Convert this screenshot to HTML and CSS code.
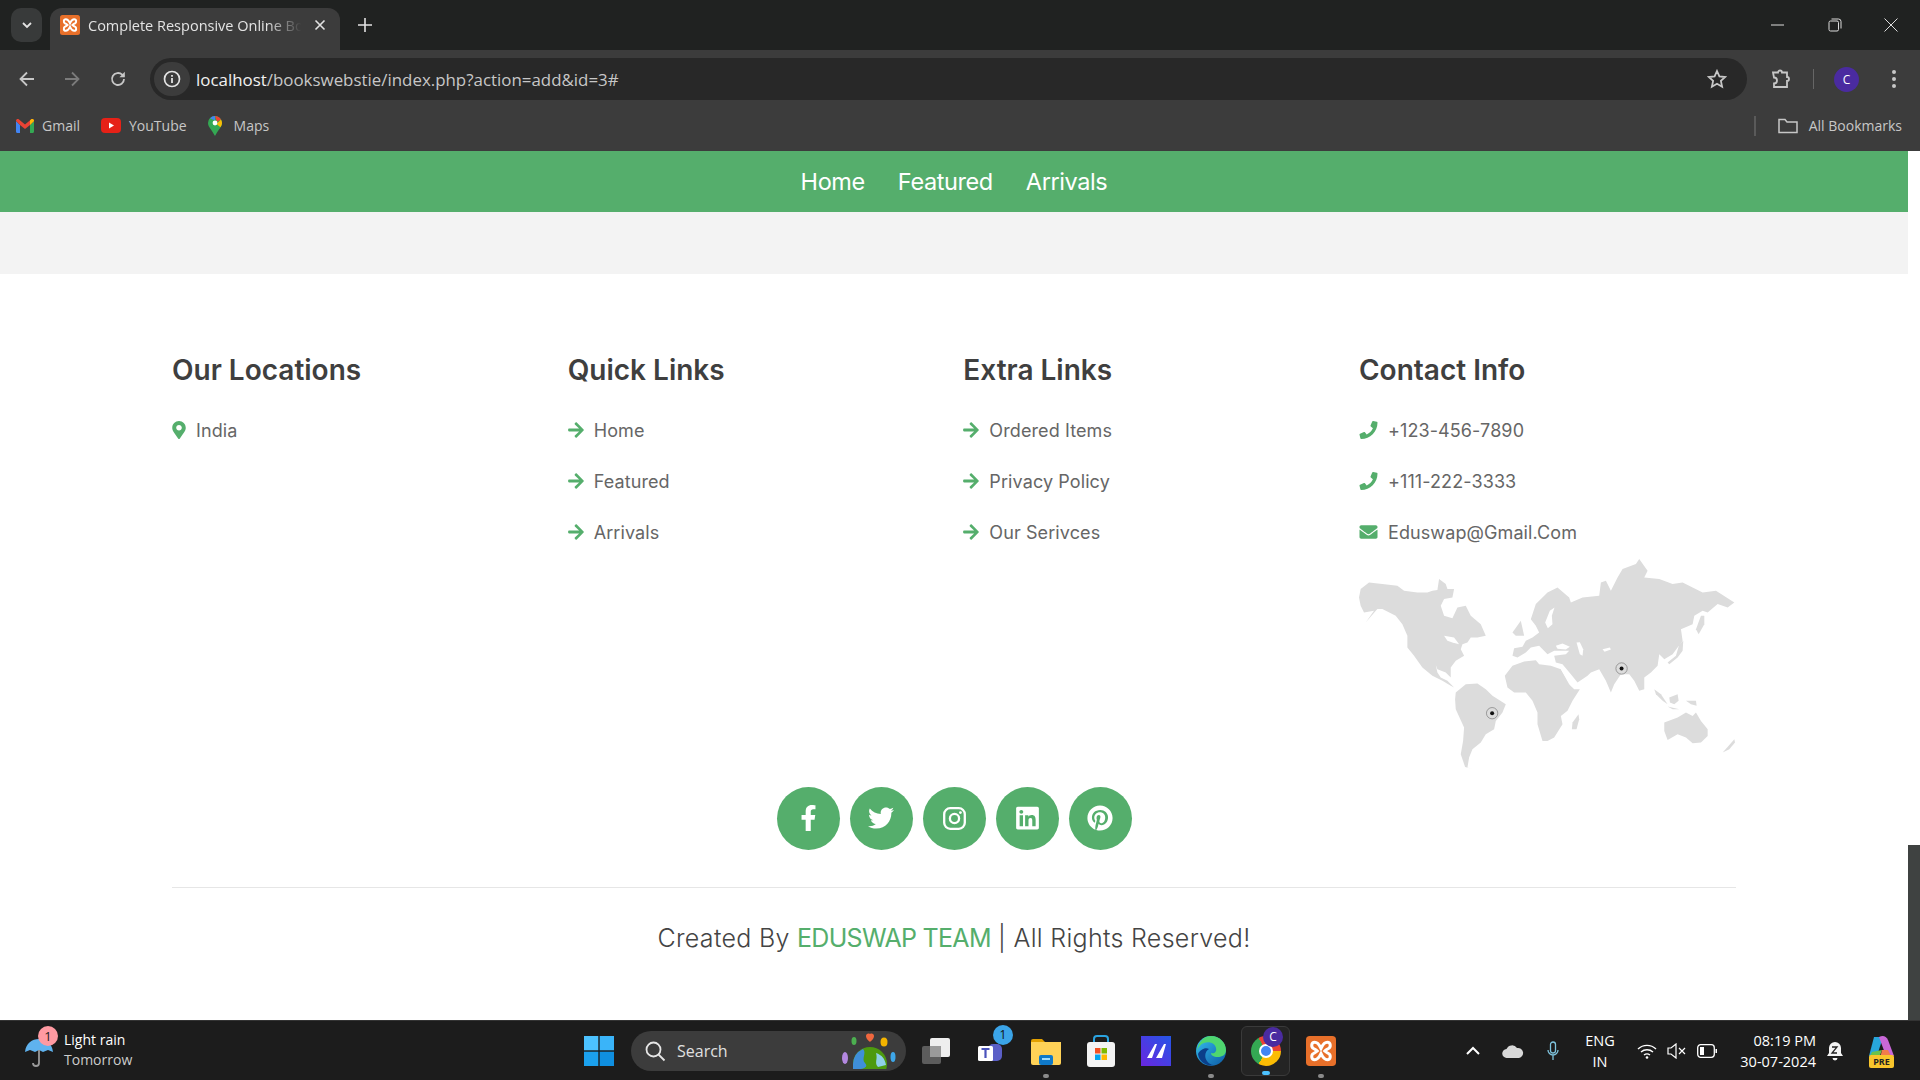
FILE: index.html
```html
<!DOCTYPE html>
<html lang="en">
<head>
    <meta charset="UTF-8">
    <meta name="viewport" content="width=device-width, initial-scale=1.0">
    <title>Complete Responsive Online Book Store</title>
    <link rel="stylesheet" href="styles.css">
</head>
<body>
<svg class="defs" width="0" height="0">
    <symbol id="i-arrow" viewBox="0 0 448 512"><path d="M190.5 66.9l22.2-22.2c9.4-9.4 24.6-9.4 33.9 0L441 239c9.4 9.4 9.4 24.6 0 33.9L246.6 467.3c-9.4 9.4-24.6 9.4-33.9 0l-22.2-22.2c-9.5-9.5-9.3-25 .4-34.3L311.4 296H24c-13.3 0-24-10.7-24-24v-32c0-13.3 10.7-24 24-24h287.4L190.9 101.2c-9.8-9.3-10-24.8-.4-34.3z"/></symbol>
    <symbol id="i-marker" viewBox="0 0 384 512"><path d="M172.268 501.67C26.97 291.031 0 269.413 0 192 0 85.961 85.961 0 192 0s192 85.961 192 192c0 77.413-26.97 99.031-172.268 309.67-9.535 13.774-29.93 13.773-39.464 0zM192 272c44.183 0 80-35.817 80-80s-35.817-80-80-80-80 35.817-80 80 35.817 80 80 80z"/></symbol>
    <symbol id="i-phone" viewBox="0 0 512 512"><path d="M493.4 24.6l-104-24c-11.3-2.6-22.9 3.3-27.5 13.9l-48 112c-4.2 9.8-1.4 21.3 6.9 28l60.6 49.6c-36 76.7-98.9 140.5-177.2 177.2l-49.6-60.6c-6.8-8.3-18.2-11.1-28-6.9l-112 48C3.9 366.5-2 378.1.6 389.4l24 104C27.1 504.2 36.7 512 48 512c256.1 0 464-207.5 464-464 0-11.2-7.7-20.9-18.6-23.4z"/></symbol>
    <symbol id="i-mail" viewBox="0 0 512 512"><path d="M502.3 190.8c3.9-3.1 9.7-.2 9.7 4.7V400c0 26.5-21.5 48-48 48H48c-26.5 0-48-21.5-48-48V195.6c0-5 5.7-7.8 9.7-4.7 22.4 17.4 52.1 39.5 154.1 113.6 21.1 15.4 56.7 47.8 92.2 47.6 35.7.3 72-32.8 92.3-47.6 102-74.1 131.6-96.3 154-113.7zM256 320c23.2.4 56.6-29.2 73.4-41.4 132.7-96.3 142.8-104.7 173.4-128.7 5.8-4.5 9.2-11.5 9.2-18.9v-19c0-26.5-21.5-48-48-48H48C21.5 64 0 85.5 0 112v19c0 7.4 3.4 14.3 9.2 18.9 30.6 23.9 40.7 32.4 173.4 128.7 16.8 12.2 50.2 41.8 73.4 41.4z"/></symbol>
    <symbol id="i-xampp" viewBox="0 0 24 24">
        <rect width="24" height="24" rx="3" fill="#e8702a"/>
        <path d="M7 5c3 0 4 3 5 5 1-2 2-5 5-5 3 0 3 4 1 5-1 .6-2 1-3 2 1 1 2 1.400 3 2 2 1 2 5-1 5-3 0-4-3-5-5-1 2-2 5-5 5-3 0-3-4-1-5 1-.6 2-1 3-2-1-1-2-1.400-3-2-2-1-2-5 1-5z" fill="none" stroke="#fff" stroke-width="2.400"/>
    </symbol>
</svg>

<!-- barra do navegador -->
<div class="tabstrip">
    <div class="tab-menu">
        <svg width="12" height="12" viewBox="0 0 12 12"><path d="M2 4l4 4 4-4" fill="none" stroke="#e3e3e3" stroke-width="1.800"/></svg>
    </div>
    <div class="tab">
        <svg class="tab-favicon" width="20" height="20"><use href="#i-xampp"/></svg>
        <span class="tab-title">Complete Responsive Online Bo</span>
        <svg width="12" height="12" viewBox="0 0 12 12"><path d="M1.500 1.500l9 9M10.500 1.500l-9 9" stroke="#e3e3e3" stroke-width="1.600"/></svg>
    </div>
    <svg class="tab-new" width="14" height="14" viewBox="0 0 14 14"><path d="M7 0v14M0 7h14" stroke="#e3e3e3" stroke-width="1.600"/></svg>
    <div class="window-controls">
        <svg width="14" height="14" viewBox="0 0 14 14"><path d="M0 7h13" stroke="#ddd" stroke-width="1"/></svg>
        <svg width="14" height="14" viewBox="0 0 14 14"><rect x="1" y="3" width="9.500" height="10" rx="1.500" fill="none" stroke="#ddd"/><path d="M3.500 1h7a2.500 2.500 0 0 1 2.500 2.500v7" fill="none" stroke="#ddd"/></svg>
        <svg width="14" height="14" viewBox="0 0 14 14"><path d="M.5.500l13 13M13.500.500l-13 13" stroke="#ddd" stroke-width="1"/></svg>
    </div>
</div>

<div class="toolbar">
    <svg class="nav-btn" width="18" height="18" viewBox="0 0 18 18"><path d="M16 9H3M9 2.500L2.500 9 9 15.500" fill="none" stroke="#c7c7c7" stroke-width="1.800"/></svg>
    <svg class="nav-btn" width="18" height="18" viewBox="0 0 18 18"><path d="M2 9h13M9 2.500L15.500 9 9 15.500" fill="none" stroke="#7b7b7b" stroke-width="1.800"/></svg>
    <svg class="nav-btn" width="18" height="18" viewBox="0 0 18 18"><path d="M15 9a6 6 0 1 1-1.800-4.300L15 6.500" fill="none" stroke="#c7c7c7" stroke-width="1.800"/><path d="M15.800 1.800v5.400h-5.400z" fill="#c7c7c7"/></svg>
    <div class="omnibox">
        <span class="site-info">
            <svg width="18" height="18" viewBox="0 0 18 18"><circle cx="9" cy="9" r="7.500" fill="none" stroke="#e3e3e3" stroke-width="1.700"/><path d="M9 8v5M9 5v1.800" stroke="#e3e3e3" stroke-width="1.800"/></svg>
        </span>
        <span class="url"><b>localhost</b>/bookswebstie/index.php?action=add&amp;id=3#</span>
        <svg class="star" width="20" height="20" viewBox="0 0 20 20"><path d="M10 2l2.400 5.400 5.800.6-4.300 3.900 1.200 5.800L10 14.800l-5.100 2.900 1.200-5.800L1.800 8l5.800-.6z" fill="none" stroke="#c7c7c7" stroke-width="1.800"/></svg>
    </div>
    <svg class="ext" width="20" height="20" viewBox="0 0 20 20"><path d="M2 3.500h5a2 2 0 0 1 4 0h5v4.500a2 2 0 0 1 0 4v6H3v-3.500a2.500 2.500 0 0 0 0-6z" fill="none" stroke="#c7c7c7" stroke-width="1.800"/></svg>
    <span class="toolbar-sep"></span>
    <span class="avatar">C</span>
    <svg class="kebab" width="6" height="20" viewBox="0 0 6 20"><circle cx="3" cy="3" r="2" fill="#c7c7c7"/><circle cx="3" cy="10" r="2" fill="#c7c7c7"/><circle cx="3" cy="17" r="2" fill="#c7c7c7"/></svg>
</div>

<div class="bookmarks">
    <a class="bookmark">
        <svg width="18" height="14" viewBox="0 0 18 14"><path d="M0 2v10.500c0 .8.600 1.500 1.400 1.500H4V6z" fill="#4285f4"/><path d="M14 6v8h2.600c.8 0 1.400-.7 1.400-1.500V2z" fill="#34a853"/><path d="M0 2c0-2 2-2.500 3-1.500L9 5.500l6-5c1-1 3-.5 3 1.500l-4 4-5 4-5-4z" fill="#ea4335"/><path d="M14 1.500l1-1c1-1 3-.5 3 1.500l-4 4z" fill="#fbbc04"/></svg>
        <span>Gmail</span>
    </a>
    <a class="bookmark">
        <svg width="20" height="15" viewBox="0 0 20 15"><rect width="20" height="15" rx="4" fill="#e62117"/><path d="M8 4.500l5 3-5 3z" fill="#fff"/></svg>
        <span>YouTube</span>
    </a>
    <a class="bookmark bookmark-maps">
        <svg width="14" height="20" viewBox="0 0 14 20"><path d="M7 0a7 7 0 0 1 7 7c0 4-4 7-7 13C4 14 0 11 0 7a7 7 0 0 1 7-7z" fill="#34a853"/><path d="M2 2.300A7 7 0 0 1 7 0v4.500z" fill="#4285f4"/><path d="M7 0a7 7 0 0 1 6 3.500L9 6z" fill="#ea4335"/><path d="M13 3.500A7 7 0 0 1 14 7c0 1.500-.7 3-1.600 4.200L8.500 8z" fill="#fbbc04"/><circle cx="7" cy="7" r="2.400" fill="#fff"/></svg>
        <span>Maps</span>
    </a>
    <span class="bookmarks-sep"></span>
    <a class="bookmark all-bookmarks">
        <svg width="20" height="16" viewBox="0 0 20 16"><path d="M1 14.500V1.500h6l2 2.500h10v10.500z" fill="none" stroke="#c7c7c7" stroke-width="1.500"/></svg>
        <span>All Bookmarks</span>
    </a>
</div>

<!-- pagina -->
<div class="viewport">
    <div class="page">
        <nav class="navbar">
            <a href="#">Home</a>
            <a href="#">Featured</a>
            <a href="#">Arrivals</a>
        </nav>
        <div class="band"></div>

        <footer class="footer">
            <div class="footer-grid">
                <div class="box">
                    <h3>Our Locations</h3>
                    <a href="#"><svg class="ico ico-marker"><use href="#i-marker"/></svg>India</a>
                </div>
                <div class="box">
                    <h3>Quick Links</h3>
                    <a href="#"><svg class="ico"><use href="#i-arrow"/></svg>Home</a>
                    <a href="#"><svg class="ico"><use href="#i-arrow"/></svg>Featured</a>
                    <a href="#"><svg class="ico"><use href="#i-arrow"/></svg>Arrivals</a>
                </div>
                <div class="box">
                    <h3>Extra Links</h3>
                    <a href="#"><svg class="ico"><use href="#i-arrow"/></svg>Ordered Items</a>
                    <a href="#"><svg class="ico"><use href="#i-arrow"/></svg>Privacy Policy</a>
                    <a href="#"><svg class="ico"><use href="#i-arrow"/></svg>Our Serivces</a>
                </div>
                <div class="box">
                    <h3>Contact Info</h3>
                    <a href="#"><svg class="ico"><use href="#i-phone"/></svg>+123-456-7890</a>
                    <a href="#"><svg class="ico"><use href="#i-phone"/></svg>+111-222-3333</a>
                    <a href="#"><svg class="ico"><use href="#i-mail"/></svg>Eduswap@Gmail.Com</a>
                    <svg class="worldmap" viewBox="60 55 1130 632">
                        <g fill="#dcdcdc">
                            <polygon points="60,170 65,145 90,125 130,130 175,135 195,150 235,155 265,155 280,150 295,148 300,115 320,130 325,145 345,145 340,170 315,175 305,195 315,225 340,232 355,200 380,195 395,225 425,250 440,285 415,290 395,290 385,305 370,310 365,325 375,345 350,360 335,380 335,410 320,395 295,385 290,372 295,395 305,410 325,420 345,440 335,435 310,420 280,405 250,380 225,345 205,320 205,285 190,250 170,225 130,205 115,205 80,245 105,210 75,215 65,195"/>
                            <polygon points="350,455 380,430 415,428 440,445 460,465 500,490 490,515 470,540 465,565 440,580 425,605 400,625 390,650 385,680 400,684 378,678 365,640 372,600 375,560 350,505 348,475"/>
                            <polygon points="497,405 520,375 555,362 590,358 600,370 635,375 665,385 690,430 705,445 722,445 700,480 685,510 665,525 670,550 645,590 625,600 610,600 595,550 595,515 580,480 560,455 525,455 505,440"/>
                            <polygon points="700,545 718,520 720,535 712,565 698,565"/>
                            <polygon points="520,345 525,322 550,318 560,300 580,290 600,275 590,255 575,235 590,190 625,155 655,140 690,170 695,185 730,170 780,165 785,125 800,120 815,150 835,110 850,85 890,70 900,55 925,90 915,110 960,115 1000,130 1030,125 1060,140 1090,155 1130,150 1185,185 1165,200 1135,190 1105,215 1090,210 1065,225 1060,250 1025,265 1030,300 1000,340 975,355 960,340 955,375 935,395 915,410 915,445 900,450 885,420 870,400 845,400 825,430 815,455 800,420 780,385 755,395 745,405 715,425 695,400 670,370 650,365 645,345 680,340 690,330 645,330 625,340 600,315 575,320 560,335 535,350"/>
                            <polygon points="975,545 1015,530 1040,515 1060,525 1070,515 1085,540 1105,565 1105,585 1085,605 1060,607 1040,590 1015,580 985,597 975,570"/>
                            <polygon points="1150,635 1170,612 1185,595 1187,605 1170,625"/>
                            <polygon points="1070,265 1085,225 1095,225 1095,250 1078,280"/>
                            <polygon points="985,365 1010,345 1020,310 1032,300 1030,330 1015,350 990,370"/>
                            <polygon points="520,275 545,240 555,285 530,285"/>
                            <polygon points="945,445 965,460 985,490 970,480 950,460"/>
                            <polygon points="990,470 1015,460 1018,480 1005,490 992,485"/>
                            <polygon points="1040,480 1070,480 1072,495 1055,490"/>
                            <polygon points="985,497 1020,505 1000,505"/>
                        </g>
                        <g fill="#fff">
                            <polygon points="650,315 670,308 692,318 680,326 655,324"/>
                            <polygon points="712,305 722,304 732,325 730,345 722,340"/>
                            <polygon points="618,245 632,210 646,200 638,225 640,250 626,262"/>
                            <polygon points="315,285 345,290 360,310 340,305 325,300"/>
                            <polygon points="790,325 812,320 815,326 796,333"/>
                            <polygon points="665,385 672,385 702,436 696,436"/>
                        </g>
                        <g>
                            <circle cx="459" cy="517" r="17" fill="none" stroke="#777" stroke-width="2"/>
                            <circle cx="459" cy="517" r="6" fill="#111"/>
                            <circle cx="847" cy="383" r="17" fill="none" stroke="#777" stroke-width="2"/>
                            <circle cx="847" cy="383" r="6" fill="#111"/>
                        </g>
                    </svg>
                </div>
            </div>

            <div class="share">
                <a href="#"><svg width="21" height="26" viewBox="0 0 320 512"><path d="M279.14 288l14.22-92.66h-88.91v-60.13c0-25.35 12.42-50.06 52.24-50.06h40.42V6.26S260.43 0 225.36 0c-73.22 0-121.08 44.38-121.08 124.72v70.62H22.89V288h81.39v224h100.17V288z"/></svg></a>
                <a href="#"><svg width="26" height="26" viewBox="0 0 512 512"><path d="M459.37 151.716c.325 4.548.325 9.097.325 13.645 0 138.72-105.583 298.558-298.558 298.558-59.452 0-114.68-17.219-161.137-47.106 8.447.974 16.568 1.299 25.34 1.299 49.055 0 94.213-16.568 130.274-44.832-46.132-.975-84.792-31.188-98.112-72.772 6.498.974 12.995 1.624 19.818 1.624 9.421 0 18.843-1.3 27.614-3.573-48.081-9.747-84.143-51.98-84.143-102.985v-1.299c13.969 7.797 30.214 12.67 47.431 13.319-28.264-18.843-46.781-51.005-46.781-87.391 0-19.492 5.197-37.36 14.294-52.954 51.655 63.675 129.3 105.258 216.365 109.807-1.624-7.797-2.599-15.918-2.599-24.04 0-57.828 46.782-104.934 104.934-104.934 30.213 0 57.502 12.67 76.67 33.137 23.715-4.548 46.456-13.32 66.599-25.34-7.798 24.366-24.366 44.833-46.132 57.827 21.117-2.273 41.584-8.122 60.426-16.243-14.292 20.791-32.161 39.308-52.628 54.253z"/></svg></a>
                <a href="#"><svg width="23" height="23" viewBox="0 0 23 23"><rect x="1.200" y="1.200" width="20.600" height="20.600" rx="6" fill="none" stroke="#fff" stroke-width="2.300"/><circle cx="11.500" cy="11.500" r="4.600" fill="none" stroke="#fff" stroke-width="2.300"/><circle cx="17.400" cy="5.600" r="1.400" fill="#fff"/></svg></a>
                <a href="#"><svg width="23" height="26" viewBox="0 0 448 512"><path d="M416 32H31.900C14.300 32 0 46.500 0 64.300v383.400C0 465.500 14.300 480 31.900 480H416c17.600 0 32-14.500 32-32.300V64.300c0-17.800-14.400-32.300-32-32.300zM135.400 416H69V202.200h66.500V416zm-33.200-243c-21.300 0-38.500-17.300-38.500-38.500S80.900 96 102.200 96c21.200 0 38.500 17.300 38.500 38.500 0 21.300-17.200 38.500-38.500 38.500zm282.100 243h-66.400V312c0-24.800-.5-56.700-34.500-56.700-34.600 0-39.900 27-39.900 54.900V416h-66.400V202.200h63.700v29.200h.9c8.900-16.800 30.600-34.500 62.900-34.500 67.200 0 79.700 44.300 79.700 101.900V416z"/></svg></a>
                <a href="#"><svg width="26" height="26" viewBox="0 0 496 512"><path d="M496 256c0 137-111 248-248 248-25.600 0-50.200-3.900-73.400-11.100 10.100-16.500 25.200-43.500 30.800-65 3-11.600 15.400-59 15.400-59 8.100 15.400 31.700 28.500 56.800 28.500 74.800 0 128.700-68.800 128.700-154.300 0-81.900-66.900-143.200-152.900-143.200-107 0-163.900 71.800-163.900 150.100 0 36.400 19.400 81.700 50.300 96.100 4.700 2.200 7.200 1.200 8.300-3.300.8-3.400 5-20.300 6.900-28.100.6-2.500.3-4.700-1.700-7.100-10.100-12.500-18.300-35.300-18.300-56.600 0-54.700 41.400-107.600 112-107.600 60.900 0 103.600 41.500 103.600 100.900 0 67.100-33.900 113.600-78 113.600-24.300 0-42.600-20.100-36.700-44.800 7-29.500 20.500-61.300 20.500-82.600 0-19-10.200-34.900-31.400-34.900-24.900 0-44.900 25.700-44.900 60.200 0 22 7.400 36.800 7.400 36.800s-24.500 103.800-29 123.200c-5 21.400-3 51.600-.9 71.200C65.400 450.900 0 361.100 0 256 0 119 111 8 248 8s248 111 248 248z"/></svg></a>
            </div>

            <p class="credit">Created By <span>EDUSWAP TEAM</span> | All Rights Reserved!</p>
        </footer>
    </div>
    <div class="scrollbar"><div class="scrollbar-thumb"></div></div>
</div>

<!-- barra de tarefas -->
<div class="taskbar">
    <div class="weather">
        <span class="weather-icon">
            <svg width="30" height="36" viewBox="0 0 30 36"><path d="M1 20C2 11 8 7 15 7s13 4 14 13l-5-2-5 2-4-2-4 2-5-2z" fill="#5fb2ee"/><path d="M15 18v13a3 3 0 0 1-6 0" fill="none" stroke="#9a9a9a" stroke-width="1.800"/></svg>
            <span class="weather-badge">1</span>
        </span>
        <div class="weather-text">
            <div>Light rain</div>
            <div class="weather-sub">Tomorrow</div>
        </div>
    </div>

    <div class="task-slot start">
        <svg width="30" height="30" viewBox="0 0 30 30"><rect width="14.300" height="14.300" fill="#4cc2ff"/><rect x="15.700" width="14.300" height="14.300" fill="#3ab4f9"/><rect y="15.700" width="14.300" height="14.300" fill="#1ba1ee"/><rect x="15.700" y="15.700" width="14.300" height="14.300" fill="#0f8fe0"/></svg>
    </div>
    <div class="searchbox">
        <svg width="22" height="22" viewBox="0 0 22 22"><circle cx="9.500" cy="9.500" r="7" fill="none" stroke="#e6e6e6" stroke-width="1.800"/><path d="M14.500 14.500l6 6" stroke="#e6e6e6" stroke-width="1.800"/></svg>
        <span>Search</span>
        <svg class="search-earth" width="60" height="36" viewBox="0 0 60 36"><clipPath id="earth-clip"><rect x="0" y="0" width="60" height="36"/></clipPath><g clip-path="url(#earth-clip)"><circle cx="30" cy="31" r="17" fill="#4d9a0f"/><path d="M13 31a17 17 0 0 1 10-15c4 4-2 10 2 14s-2 6-6 6h-6z" fill="#3f8fd9"/><path d="M36 20c6 2 9 6 10 12l-8 2c-4-4 0-8-2-14z" fill="#8fd0e8"/><path d="M30 1c2-1 4 0 4 2 0 3-3 5-4 6-1-1-4-3-4-6 0-2 2-3 4-2z" fill="#f0673e"/><ellipse cx="14" cy="8" rx="2.500" ry="4" fill="#4caf50"/><ellipse cx="44" cy="9" rx="3.500" ry="4.500" fill="#f4b400"/><ellipse cx="5" cy="25" rx="3" ry="6" fill="#b388e0"/><ellipse cx="53" cy="24" rx="2.500" ry="5" fill="#3ea6e8"/></g></svg>
    </div>
    <div class="task-apps">
        <div class="task-slot">
            <svg width="30" height="28" viewBox="0 0 30 28"><rect x="1" y="9" width="19" height="18" rx="2" fill="#5c5c5c"/><rect x="9" y="1" width="20" height="19" rx="2" fill="#eeeeee"/><rect x="9" y="9" width="11" height="11" fill="#9a9a9a"/></svg>
        </div>
        <div class="task-slot">
            <svg width="28" height="28" viewBox="0 0 28 28"><rect x="11" y="7" width="14" height="17" rx="5" fill="#5b5fc7"/><rect x="1" y="9" width="15" height="15" rx="1.500" fill="#fff"/><path d="M4.500 12h8M8.500 12v9" stroke="#4b53bc" stroke-width="2.200"/></svg>
            <span class="task-badge blue">1</span>
        </div>
        <div class="task-slot running">
            <svg width="32" height="30" viewBox="0 0 32 30"><path d="M1 5a2 2 0 0 1 2-2h9l3 3h-14z" fill="#e3a000"/><path d="M1 6h30v21a2 2 0 0 1-2 2H3a2 2 0 0 1-2-2z" fill="#ffd257"/><rect x="9" y="19" width="14" height="10" rx="2" fill="#0f79c9"/><rect x="12" y="22" width="8" height="2" fill="#9fdcff"/></svg>
        </div>
        <div class="task-slot">
            <svg width="30" height="32" viewBox="0 0 30 32"><path d="M8 9V4a3 3 0 0 1 3-3h8a3 3 0 0 1 3 3v5" fill="none" stroke="#2aa3e0" stroke-width="2"/><rect x="1" y="7" width="28" height="25" rx="3" fill="#f3f3f3"/><rect x="9" y="13" width="5.500" height="5.500" fill="#f25022"/><rect x="15.500" y="13" width="5.500" height="5.500" fill="#7fba00"/><rect x="9" y="19.500" width="5.500" height="5.500" fill="#00a4ef"/><rect x="15.500" y="19.500" width="5.500" height="5.500" fill="#ffb900"/></svg>
        </div>
        <div class="task-slot">
            <svg width="30" height="30" viewBox="0 0 30 30"><defs><linearGradient id="mm" x1="0" y1="1" x2="1" y2="0"><stop offset="0" stop-color="#6a26e0"/><stop offset="1" stop-color="#2456e6"/></linearGradient></defs><rect width="30" height="30" fill="url(#mm)"/><path d="M6 22L14 8h2L11 22zM15 22l8-14h2l-4 14z" fill="#fff"/></svg>
        </div>
        <div class="task-slot running">
            <svg width="30" height="30" viewBox="0 0 30 30"><defs><linearGradient id="edge-a" x1="0" y1="0" x2="1" y2="1"><stop offset="0" stop-color="#35c1f1"/><stop offset="1" stop-color="#0c59a4"/></linearGradient></defs><circle cx="15" cy="15" r="15" fill="url(#edge-a)"/><path d="M15 0c9 0 15 7 15 14 0 5-4 7-8 7-5 0-7-2-7-4 3 1 6-1 5-5-1-5-7-7-12-5-3 1-6 4-7 8C2 6 8 0 15 0z" fill="#4fd66f"/><path d="M13 13c-4 2-5 8-2 12 1 2 4 4 7 4-7 2-15-3-16-11 2-4 7-7 11-5z" fill="#0b3f8a"/></svg>
        </div>
        <div class="task-slot active">
            <span class="chrome-logo"><span></span></span>
            <span class="task-badge purple">C</span>
        </div>
        <div class="task-slot running">
            <svg width="30" height="30"><use href="#i-xampp"/></svg>
        </div>
    </div>

    <div class="tray">
        <div class="tray-slot"><svg width="14" height="9" viewBox="0 0 14 9"><path d="M1 8l6-6 6 6" fill="none" stroke="#fff" stroke-width="2"/></svg></div>
        <div class="tray-slot"><svg width="22" height="14" viewBox="0 0 22 14"><path d="M5 14a4.500 4.500 0 0 1-.5-9A6 6 0 0 1 15 4a5 5 0 0 1 2 10z" fill="#d8d8d8"/></svg></div>
        <div class="tray-slot"><svg width="12" height="20" viewBox="0 0 12 20"><rect x="3.500" y="1" width="5" height="11" rx="2.500" fill="none" stroke="#7fc4de" stroke-width="1.300"/><path d="M1 9a5 5 0 0 0 10 0M6 14v5" fill="none" stroke="#7fc4de" stroke-width="1.300"/></svg></div>
        <div class="tray-lang">ENG<br>IN</div>
        <div class="tray-slot wifi"><svg width="20" height="16" viewBox="0 0 20 16"><path d="M1 6a13 13 0 0 1 18 0M4 9a9 9 0 0 1 12 0M7 12a5 5 0 0 1 6 0" fill="none" stroke="#fff" stroke-width="1.400"/><circle cx="10" cy="14.500" r="1.300" fill="#fff"/></svg></div>
        <div class="tray-slot"><svg width="20" height="16" viewBox="0 0 20 16"><path d="M1 5h3l5-4v14l-5-4H1z" fill="none" stroke="#fff" stroke-width="1.200"/><path d="M12 5l6 6M18 5l-6 6" stroke="#fff" stroke-width="1.200"/></svg></div>
        <div class="tray-slot"><svg width="20" height="14" viewBox="0 0 20 14"><rect x=".7" y=".7" width="16.600" height="12.600" rx="3" fill="none" stroke="#fff" stroke-width="1.300"/><rect x="3" y="3" width="4" height="8" fill="#fff"/><rect x="18.500" y="5" width="1.500" height="4" fill="#fff"/></svg></div>
        <div class="tray-clock">08:19 PM<br>30-07-2024</div>
        <div class="tray-bell"><svg width="18" height="20" viewBox="0 0 18 20"><path d="M9 1a6 6 0 0 0-6 6v5l-2 3h16l-2-3V7a6 6 0 0 0-6-6z" fill="#f4f4f4"/><path d="M6.500 17a2.500 2.500 0 0 0 5 0z" fill="#f4f4f4"/><path d="M6 6h5l-5 6h5" fill="none" stroke="#222" stroke-width="1.300"/></svg></div>
        <div class="tray-copilot">
            <svg width="30" height="34" viewBox="0 0 30 34"><path d="M8 3h9l-6 19H3z" fill="#27a6dc"/><path d="M13 3c4-2 7-1 9 3l6 16H20z" fill="#c968d8"/><path d="M6 18l10-2-3 8H3z" fill="#6cc24a"/><path d="M16 16l6 0 4 8H14z" fill="#f17c4b"/><rect x="3" y="21" width="25" height="13" rx="2" fill="#f8c52c"/><text x="15.500" y="31" class="pre-text">PRE</text></svg>
        </div>
    </div>
</div>
</body>
</html>
```

FILE: styles.css
```css
* {
    box-sizing: border-box;
}

html, body {
    margin: 0;
    height: 1080px;
    overflow: hidden;
}

body {
    display: flex;
    flex-direction: column;
    background-color: #fff;
    font-family: "Inter", "Liberation Sans", sans-serif;
}

a {
    text-decoration: none;
}

.defs {
    position: absolute;
}

/* ---- navegador ---- */
.tabstrip {
    height: 50px;
    flex: none;
    display: flex;
    align-items: flex-end;
    background-color: #202221;
    font-family: "Open Sans", sans-serif;
}

.tab-menu {
    width: 31px;
    height: 34px;
    margin: 0 8px 8px 11px;
    border-radius: 10px;
    background-color: #383a3a;
    display: flex;
    align-items: center;
    justify-content: center;
}

.tab {
    width: 290px;
    height: 42px;
    padding: 0 14px 8px 10px;
    display: flex;
    align-items: center;
    gap: 8px;
    border-radius: 12px 12px 0 0;
    background-color: #3c3c3c;
}

.tab-favicon {
    flex: none;
}

.tab-title {
    flex: 1;
    white-space: nowrap;
    font-size: 14.5px;
    color: #e3e3e3;
    -webkit-mask-image: linear-gradient(to right, #000 82%, transparent 98%);
    mask-image: linear-gradient(to right, #000 82%, transparent 98%);
}

.tab-new {
    margin: 0 0 18px 18px;
}

.window-controls {
    margin-left: auto;
    margin-bottom: 18px;
    display: flex;
    gap: 42.5px;
    padding-right: 22px;
}

.toolbar {
    height: 50px;
    flex: none;
    padding-top: 8px;
    display: flex;
    align-items: center;
    background-color: #3c3c3c;
    font-family: "Open Sans", sans-serif;
}

.nav-btn {
    margin-left: 18px;
    margin-right: 9px;
}

.nav-btn:nth-child(2) {
    margin-left: 18px;
}

.nav-btn:nth-child(3) {
    margin-left: 19px;
    margin-right: 23px;
}

.omnibox {
    width: 1597px;
    height: 42px;
    border-radius: 21px;
    background-color: #282828;
    display: flex;
    align-items: center;
    padding-left: 4px;
}

.site-info {
    width: 36px;
    height: 34px;
    border-radius: 17px;
    background-color: #3c3c3c;
    display: flex;
    align-items: center;
    justify-content: center;
}

.url {
    margin-left: 6px;
    font-size: 16.9px;
    color: #c7c7c7;
}

.url b {
    font-weight: 400;
    color: #f1f1f1;
}

.star {
    margin-left: auto;
    margin-right: 20px;
}

.ext {
    margin-left: 24px;
}

.toolbar-sep {
    width: 1px;
    height: 20px;
    margin-left: 22px;
    background-color: #666;
}

.avatar {
    width: 25px;
    height: 25px;
    margin-left: 20px;
    border-radius: 50%;
    background-color: #4a2ba0;
    color: #fff;
    font-size: 12px;
    display: flex;
    align-items: center;
    justify-content: center;
}

.kebab {
    margin-left: 32px;
}

.bookmarks {
    height: 51px;
    flex: none;
    padding: 0 18px 0 16px;
    display: flex;
    align-items: center;
    gap: 21px;
    background-color: #3c3c3c;
    font-family: "Open Sans", sans-serif;
    font-size: 14px;
    color: #c7c7c7;
}

.bookmark {
    display: flex;
    align-items: center;
    gap: 8px;
}

.bookmark-maps {
    gap: 12px;
}

.bookmarks-sep {
    width: 2px;
    height: 20px;
    margin-left: auto;
    background-color: #5a5a5a;
}

.all-bookmarks {
    gap: 11px;
    margin-left: 1px;
}

/* ---- pagina ---- */
.viewport {
    flex: 1;
    min-height: 0;
    display: flex;
}

.page {
    flex: 1;
    min-width: 0;
    background-color: #fff;
}

.scrollbar {
    width: 12px;
    display: flex;
    flex-direction: column;
    justify-content: flex-end;
    background-color: #fff;
}

.scrollbar-thumb {
    height: 175px;
    background-color: #3f4241;
}

.navbar {
    height: 61px;
    display: flex;
    align-items: center;
    justify-content: center;
    gap: 33px;
    background-color: #55ae6c;
}

.navbar a {
    color: #fff;
    font-size: 23.5px;
    letter-spacing: -0.4px;
}

.band {
    height: 62px;
    background-color: #f3f3f3;
}

.footer {
    padding: 0 172px;
}

.footer-grid {
    display: grid;
    grid-template-columns: repeat(4, 1fr);
    gap: 20px;
    padding-top: 78px;
}

.box {
    display: flex;
    flex-direction: column;
    align-items: flex-start;
}

.box h3 {
    margin: 0 0 16.5px;
    font-size: 28px;
    line-height: 36px;
    font-weight: 600;
    color: #3f3f3f;
}

.box a {
    height: 51px;
    display: flex;
    align-items: center;
    font-size: 18px;
    letter-spacing: 0.1px;
    color: #666;
}

.ico {
    width: 16px;
    height: 18px;
    margin-right: 10px;
    fill: #55ae6c;
}

.box:last-child .ico {
    width: 19px;
    margin-right: 10px;
}

.ico-marker {
    width: 14px;
    margin-right: 10px;
}

.worldmap {
    width: 377px;
    height: 211px;
    margin-top: 1px;
}

.share {
    margin-top: 17px;
    display: flex;
    justify-content: center;
    gap: 10px;
}

.share a {
    width: 63px;
    height: 63px;
    border-radius: 50%;
    background-color: #55ae6c;
    display: flex;
    align-items: center;
    justify-content: center;
    fill: #fff;
}

.credit {
    margin: 37px 0 0;
    padding-top: 31px;
    border-top: 1px solid #e6e6e6;
    text-align: center;
    font-size: 25px;
    line-height: 38px;
    font-weight: 300;
    letter-spacing: 0.3px;
    color: #444;
}

.credit span {
    color: #55ae6c;
    font-weight: 400;
    letter-spacing: -0.7px;
}

/* ---- barra de tarefas ---- */
.taskbar {
    height: 60px;
    flex: none;
    display: flex;
    align-items: center;
    padding-left: 24px;
    background-color: #1c1c1c;
    border-top: 1px solid #333;
    font-family: "Open Sans", sans-serif;
    color: #fff;
}

.weather {
    width: 550px;
    display: flex;
    align-items: center;
    gap: 8px;
    font-size: 14px;
    line-height: 20px;
    margin-top: -2px;
}

.weather-icon {
    position: relative;
    width: 32px;
    height: 36px;
}

.weather-badge {
    position: absolute;
    top: -6px;
    left: 14px;
    width: 20px;
    height: 20px;
    border-radius: 50%;
    background-color: #ff9aa2;
    color: #222;
    font-size: 13px;
    line-height: 20px;
    text-align: center;
}

.weather-sub {
    color: #ccc;
}

.task-slot {
    position: relative;
    width: 49px;
    height: 50px;
    margin: 0 3px;
    flex: none;
    display: flex;
    align-items: center;
    justify-content: center;
}

.task-slot.start {
    width: 50px;
    margin: 0 7px 0 0;
}

.searchbox {
    width: 275px;
    height: 40px;
    margin-right: 2px;
    padding-left: 13px;
    border-radius: 20px;
    background-color: #3c3c3c;
    display: flex;
    align-items: center;
    gap: 11px;
    font-size: 16px;
    color: #e0e0e0;
}

.search-earth {
    margin-left: auto;
    margin-right: 6px;
}

.task-apps {
    display: flex;
}

.task-slot.running::after,
.task-slot.active::after {
    content: "";
    position: absolute;
    bottom: -2px;
    left: 50%;
    width: 6px;
    height: 4px;
    margin-left: -3px;
    border-radius: 2px;
    background-color: #8a8a8a;
}

.task-slot.active {
    border: 1px solid #3a3a3a;
    border-radius: 6px;
    background-color: #242424;
}

.task-slot.active::after {
    bottom: 0;
    background-color: #4cc2ff;
    width: 8px;
    margin-left: -4px;
}

.task-badge {
    position: absolute;
    top: -1px;
    right: 2px;
    width: 20px;
    height: 20px;
    border-radius: 50%;
    font-size: 12px;
    line-height: 20px;
    text-align: center;
    color: #fff;
}

.task-badge.blue {
    background-color: #3ba4e8;
    color: #111;
}

.task-badge.purple {
    top: 0;
    right: 6px;
    background-color: #4a2ba0;
}

.chrome-logo {
    width: 30px;
    height: 30px;
    border-radius: 50%;
    background: conic-gradient(from -30deg, #ea4335 0 120deg, #fbbc04 120deg 240deg, #34a853 240deg 360deg);
    display: flex;
    align-items: center;
    justify-content: center;
}

.chrome-logo span {
    width: 14px;
    height: 14px;
    border-radius: 50%;
    background-color: #4285f4;
    border: 2px solid #fff;
}

.tray {
    margin-left: auto;
    margin-right: 12px;
    display: flex;
    align-items: center;
    font-size: 14.5px;
}

.tray-slot {
    width: 40px;
    display: flex;
    align-items: center;
    justify-content: center;
}

.tray-slot.wifi {
    margin-left: 5px;
}

.tray-slot.wifi,
.tray-slot.wifi ~ .tray-slot {
    width: 30px;
}

.tray-lang {
    width: 54px;
    text-align: center;
    line-height: 21px;
}

.tray-clock {
    width: 94px;
    text-align: right;
    line-height: 21px;
}

.tray-bell {
    width: 38px;
    display: flex;
    justify-content: center;
}

.tray-copilot {
    width: 54px;
    display: flex;
    justify-content: center;
}

.pre-text {
    font-family: "Open Sans", sans-serif;
    font-size: 9px;
    font-weight: 700;
    text-anchor: middle;
    fill: #222;
}
```
